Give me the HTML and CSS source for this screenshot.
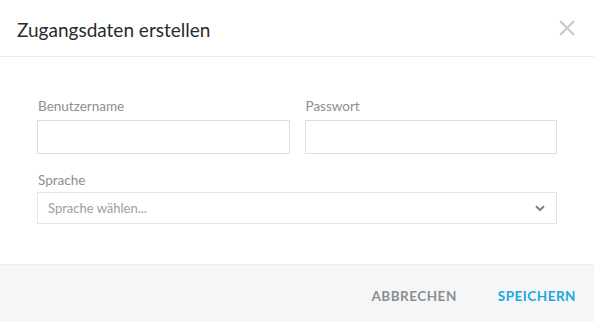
FILE: index.html
```html
<!DOCTYPE html>
<html lang="de">
<head>
<meta charset="utf-8">
<title>Zugangsdaten erstellen</title>
<link rel="stylesheet" href="styles.css">
</head>
<body>
<div class="modal">
  <header class="modal-header">
    <h1 class="modal-title">Zugangsdaten erstellen</h1>
    <button class="close" aria-label="Schließen">
      <svg width="16" height="16" viewBox="0 0 16 16"><path d="M1 1 L15 15 M15 1 L1 15" stroke="#c9c9c9" stroke-width="2" fill="none"/></svg>
    </button>
  </header>
  <main class="modal-body">
    <div class="row">
      <div class="field">
        <label class="label">Benutzername</label>
        <input class="input" type="text">
      </div>
      <div class="field">
        <label class="label">Passwort</label>
        <input class="input" type="password">
      </div>
    </div>
    <div class="field">
      <label class="label">Sprache</label>
      <div class="select">
        <span class="placeholder">Sprache wählen...</span>
        <svg class="chevron" width="10" height="7" viewBox="0 0 10 7"><path d="M1 1.2 L5 5 L9 1.2" stroke="#7b8388" stroke-width="2" fill="none"/></svg>
      </div>
    </div>
  </main>
  <footer class="modal-footer">
    <button class="btn btn-cancel">Abbrechen</button>
    <button class="btn btn-save">Speichern</button>
  </footer>
</div>
</body>
</html>
```
FILE: styles.css
```css
html, body {
  margin: 0;
  padding: 0;
  background: #fff;
}
body {
  font-family: Lato, "Noto Sans", sans-serif;
  width: 594px;
  height: 322px;
  overflow: hidden;
}
.modal {
  display: flex;
  flex-direction: column;
  height: 322px;
}
.modal-header {
  height: 57px;
  border-bottom: 1px solid #ececec;
  display: flex;
  align-items: center;
  justify-content: space-between;
  padding: 0 19px 0 17px;
  box-sizing: border-box;
}
.modal-title {
  margin: 0;
  font-size: 19px;
  font-weight: 400;
  color: #262b31;
  padding-top: 2px;
}
.close {
  border: 0;
  background: none;
  padding: 0;
  display: flex;
  cursor: pointer;
}
.modal-body {
  padding: 39px 37px 0;
  flex: 1;
}
.row {
  display: grid;
  grid-template-columns: 1fr 1fr;
  gap: 15px;
  margin-bottom: 16px;
}
.field {
  display: flex;
  flex-direction: column;
}
.label {
  font-size: 13.5px;
  line-height: 20px;
  color: #8a9096;
  margin-bottom: 4px;
  padding-left: 1px;
}
.input {
  height: 34px;
  box-sizing: border-box;
  border: 1px solid #d6e2e2;
  border-radius: 0;
  margin: 0;
  font: inherit;
  outline: none;
}
.select {
  height: 32px;
  box-sizing: border-box;
  border: 1px solid #e3e4e4;
  display: flex;
  align-items: center;
  justify-content: space-between;
  padding: 0 11px 0 10px;
  margin-top: -2px;
}
.placeholder {
  font-size: 13px;
  color: #9ba0a4;
}
.modal-footer {
  height: 58px;
  background: #f5f6f8;
  border-top: 1px solid #eceeef;
  box-sizing: border-box;
  display: flex;
  align-items: center;
  justify-content: flex-end;
  padding: 0 18px 0 0;
  gap: 41px;
}
.btn {
  border: 0;
  background: none;
  padding: 0;
  font-family: inherit;
  font-size: 13.5px;
  font-weight: 700;
  text-transform: uppercase;
  letter-spacing: 0.5px;
  cursor: pointer;
  margin-top: 4px;
}
.btn-cancel { color: #8b8e91; }
.btn-save { color: #1ba8e0; }
```
